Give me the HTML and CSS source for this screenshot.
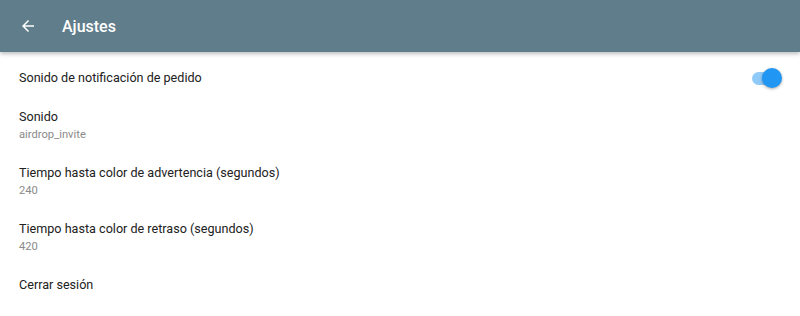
FILE: index.html
```html
<!doctype html>
<html lang="es">
  <head>
    <meta charset="UTF-8" />
    <meta name="viewport" content="width=device-width, initial-scale=1.0" />
    <title>Ajustes</title>
    <link rel="stylesheet" href="styles.css">
  </head>
  <body>
    <header class="toolbar">
      <button class="back-btn" aria-label="Atrás">
        <svg width="24" height="24" viewBox="0 0 24 24">
          <path d="M20 11H7.83l5.59-5.59L12 4l-8 8 8 8 1.41-1.41L7.83 13H20v-2z" fill="#fff" />
        </svg>
      </button>
      <h1 class="toolbar-title">Ajustes</h1>
    </header>

    <main class="settings">
      <div class="setting single">
        <span class="setting-title">Sonido de notificación de pedido</span>
        <label class="switch">
          <input type="checkbox" checked />
          <span class="track"></span>
          <span class="thumb"></span>
        </label>
      </div>

      <div class="setting">
        <div class="setting-title">Sonido</div>
        <div class="setting-sub">airdrop_invite</div>
      </div>

      <div class="setting">
        <div class="setting-title">Tiempo hasta color de advertencia (segundos)</div>
        <div class="setting-sub">240</div>
      </div>

      <div class="setting">
        <div class="setting-title">Tiempo hasta color de retraso (segundos)</div>
        <div class="setting-sub">420</div>
      </div>

      <div class="setting">
        <div class="setting-title">Cerrar sesión</div>
      </div>
    </main>
  </body>
</html>
```

FILE: styles.css
```css
:root {
  --toolbar-color: #607d8b;
  --accent: #2196f3;
}

body {
  margin: 0;
  font-family: Roboto, "Noto Sans", sans-serif;
  background: #fff;
  color: #212121;
}

.toolbar {
  display: flex;
  align-items: center;
  height: 52px;
  background: var(--toolbar-color);
  box-shadow: 0 2px 4px rgba(0, 0, 0, 0.25);
  position: relative;
  z-index: 1;
}

.back-btn {
  display: flex;
  align-items: center;
  justify-content: center;
  width: 24px;
  height: 24px;
  margin-left: 16px;
  padding: 0;
  border: none;
  background: none;
}

.back-btn svg {
  width: 18px;
  height: 18px;
}

.toolbar-title {
  margin: 0 0 0 22px;
  font-size: 16px;
  font-weight: 500;
  color: #fff;
}

.settings {
  display: flex;
  flex-direction: column;
}

.setting {
  padding: 9px 18px 8px 19px;
  height: 39px;
}

.setting.single {
  display: flex;
  align-items: center;
  justify-content: space-between;
  height: 45px;
  padding-top: 3px;
  padding-bottom: 0;
}

.setting-title {
  font-size: 12.6px;
  line-height: 16px;
}

.setting-sub {
  margin-top: 3px;
  font-size: 11.2px;
  line-height: 13px;
  color: #8a8a8a;
}

.switch {
  position: relative;
  width: 30px;
  height: 22px;
}

.switch input {
  display: none;
}

.track {
  position: absolute;
  left: 0;
  top: 5px;
  width: 28px;
  height: 13px;
  border-radius: 7px;
  background: #90caf9;
}

.thumb {
  position: absolute;
  right: 0;
  top: 1px;
  width: 20px;
  height: 20px;
  border-radius: 50%;
  background: var(--accent);
  box-shadow: 0 1px 3px rgba(0, 0, 0, 0.35);
}
```
